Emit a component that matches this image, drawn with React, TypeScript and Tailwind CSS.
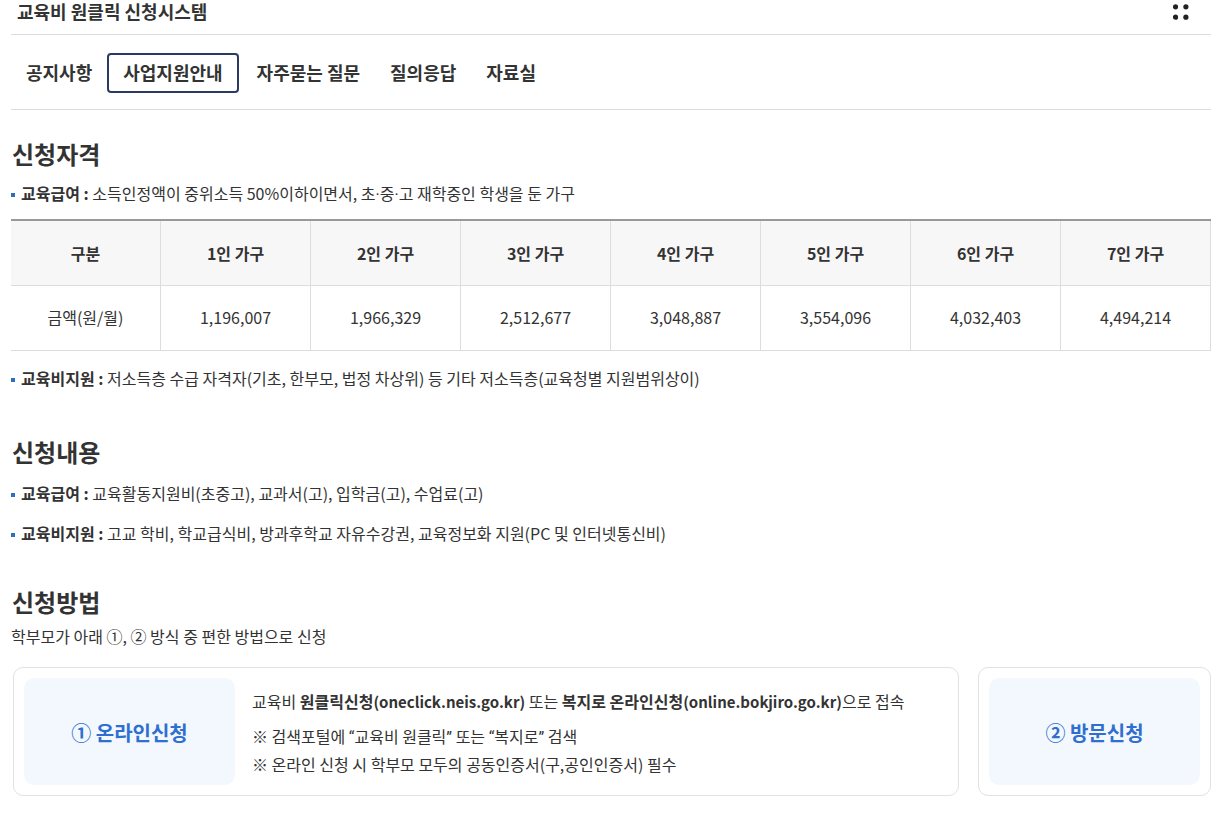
import type { ReactNode } from "react";

const tabs = ["공지사항", "사업지원안내", "자주묻는 질문", "질의응답", "자료실"];
const activeTab = "사업지원안내";

const incomes = [
  { household: "1인 가구", amount: "1,196,007" },
  { household: "2인 가구", amount: "1,966,329" },
  { household: "3인 가구", amount: "2,512,677" },
  { household: "4인 가구", amount: "3,048,887" },
  { household: "5인 가구", amount: "3,554,096" },
  { household: "6인 가구", amount: "4,032,403" },
  { household: "7인 가구", amount: "4,494,214" },
];

function SectionTitle({ children }: { children: ReactNode }) {
  return <h2 className="pl-px text-2xl leading-9 font-bold">{children}</h2>;
}

function Item({ label, children }: { label: string; children: ReactNode }) {
  return (
    <li className="flex items-center gap-1.5 leading-6">
      <span className="mt-1 size-1 shrink-0 bg-[#2f6cc4]" />
      <p>
        <strong className="font-bold">{label} :</strong> {children}
      </p>
    </li>
  );
}

/* Punctuation set in a Latin face, which keeps it narrow between Hangul. */
function Mark({ children }: { children: ReactNode }) {
  return <span className="font-['Roboto',sans-serif] leading-none">{children}</span>;
}

function Domain({ children }: { children: ReactNode }) {
  return <span className="text-[15px] leading-none">({children})</span>;
}

function MethodBadge({ children }: { children: ReactNode }) {
  return (
    <h3 className="flex w-[211px] shrink-0 items-center justify-center rounded-[10px] bg-[#f3f8ff] pt-0.5 text-xl font-bold text-[#2f6fd0]">
      {children}
    </h3>
  );
}

export default function App() {
  return (
    <div className="min-h-screen bg-white pr-[13px] pl-[11px] font-['Noto_Sans_CJK_KR',sans-serif] text-base text-[#333]">
      <header className="flex h-[35px] items-start justify-between border-b border-[#ddd] pr-[22px] pl-1.5">
        <h1 className="text-lg leading-[22px] font-bold">교육비 원클릭 신청시스템</h1>
        <button type="button" aria-label="전체 메뉴" className="mt-1">
          <svg viewBox="0 0 16 16" className="size-4" fill="#222">
            <circle cx="2.5" cy="2.8" r="2.6" />
            <circle cx="12.9" cy="2.8" r="2.6" />
            <circle cx="2.5" cy="13.2" r="2.6" />
            <circle cx="12.9" cy="13.2" r="2.6" />
          </svg>
        </button>
      </header>

      <nav className="flex h-[75px] items-center border-b border-[#ddd] pt-0.5">
        {tabs.map((tab) => (
          <a
            key={tab}
            href="#"
            aria-current={tab === activeTab ? "page" : undefined}
            className={
              tab === activeTab
                ? "mr-[3px] flex h-10 items-center rounded border-2 border-[#2a3a63] px-[14px] pb-0.5 text-lg font-bold"
                : "flex h-10 items-center px-[15px] pb-0.5 text-lg font-bold"
            }
          >
            {tab}
          </a>
        ))}
      </nav>

      <main>
        <section className="pt-[26px]">
          <SectionTitle>신청자격</SectionTitle>
          <ul className="mt-[9px]">
            <Item label="교육급여">
              소득인정액이 중위소득 50%이하이면서, 초<Mark>·</Mark>중<Mark>·</Mark>고 재학중인 학생을 둔 가구
            </Item>
          </ul>
          <table className="mt-[14px] w-full table-fixed border-separate border-spacing-0 border-t-2 border-[#999] text-center">
            <thead>
              <tr className="h-[65px] bg-[#f7f7f7]">
                <th scope="col" className="border-r border-b border-[#ddd] font-bold">
                  구분
                </th>
                {incomes.map(({ household }) => (
                  <th key={household} scope="col" className="border-r border-b border-[#ddd] font-bold">
                    {household}
                  </th>
                ))}
              </tr>
            </thead>
            <tbody>
              <tr className="h-[65px]">
                <th scope="row" className="border-r border-b border-[#ddd] pb-0.5 font-normal">
                  금액(원/월)
                </th>
                {incomes.map(({ household, amount }) => (
                  <td key={household} className="border-r border-b border-[#ddd] pb-0.5">
                    {amount}
                  </td>
                ))}
              </tr>
            </tbody>
          </table>
          <ul className="mt-[15px]">
            <Item label="교육비지원">
              저소득층 수급 자격자(기초, 한부모, 법정 차상위) 등 기타 저소득층(교육청별 지원범위상이)
            </Item>
          </ul>
        </section>

        <section className="pt-11">
          <SectionTitle>신청내용</SectionTitle>
          <ul className="mt-[11px] flex flex-col gap-4">
            <Item label="교육급여">교육활동지원비(초중고), 교과서(고), 입학금(고), 수업료(고)</Item>
            <Item label="교육비지원">
              고교 학비, 학교급식비, 방과후학교 자유수강권, 교육정보화 지원(PC 및 인터넷통신비)
            </Item>
          </ul>
        </section>

        <section className="pt-[39px] pb-5">
          <SectionTitle>신청방법</SectionTitle>
          <p className="mt-1 leading-6">학부모가 아래 ①, ② 방식 중 편한 방법으로 신청</p>
          <div className="mt-[19px] flex gap-[19px] pl-0.5">
            <article className="flex grow gap-[17px] rounded-[10px] border border-[#e2e2e2] p-[10px]">
              <MethodBadge>① 온라인신청</MethodBadge>
              <div className="pt-[9px] pb-[7px] leading-7">
                <p className="mb-[7px]">
                  교육비{" "}
                  <strong className="font-bold">
                    원클릭신청<Domain>oneclick.neis.go.kr</Domain>
                  </strong>{" "}
                  또는{" "}
                  <strong className="font-bold">
                    복지로 온라인신청<Domain>online.bokjiro.go.kr</Domain>
                  </strong>
                  으로 접속
                </p>
                <p>
                  ※ 검색포털에 <Mark>“</Mark>교육비 원클릭<Mark>”</Mark> 또는 <Mark>“</Mark>복지로
                  <Mark>”</Mark> 검색
                </p>
                <p>※ 온라인 신청 시 학부모 모두의 공동인증서(구,공인인증서) 필수</p>
              </div>
            </article>
            <article className="flex rounded-[10px] border border-[#e2e2e2] p-[10px]">
              <MethodBadge>② 방문신청</MethodBadge>
            </article>
          </div>
        </section>
      </main>
    </div>
  );
}
